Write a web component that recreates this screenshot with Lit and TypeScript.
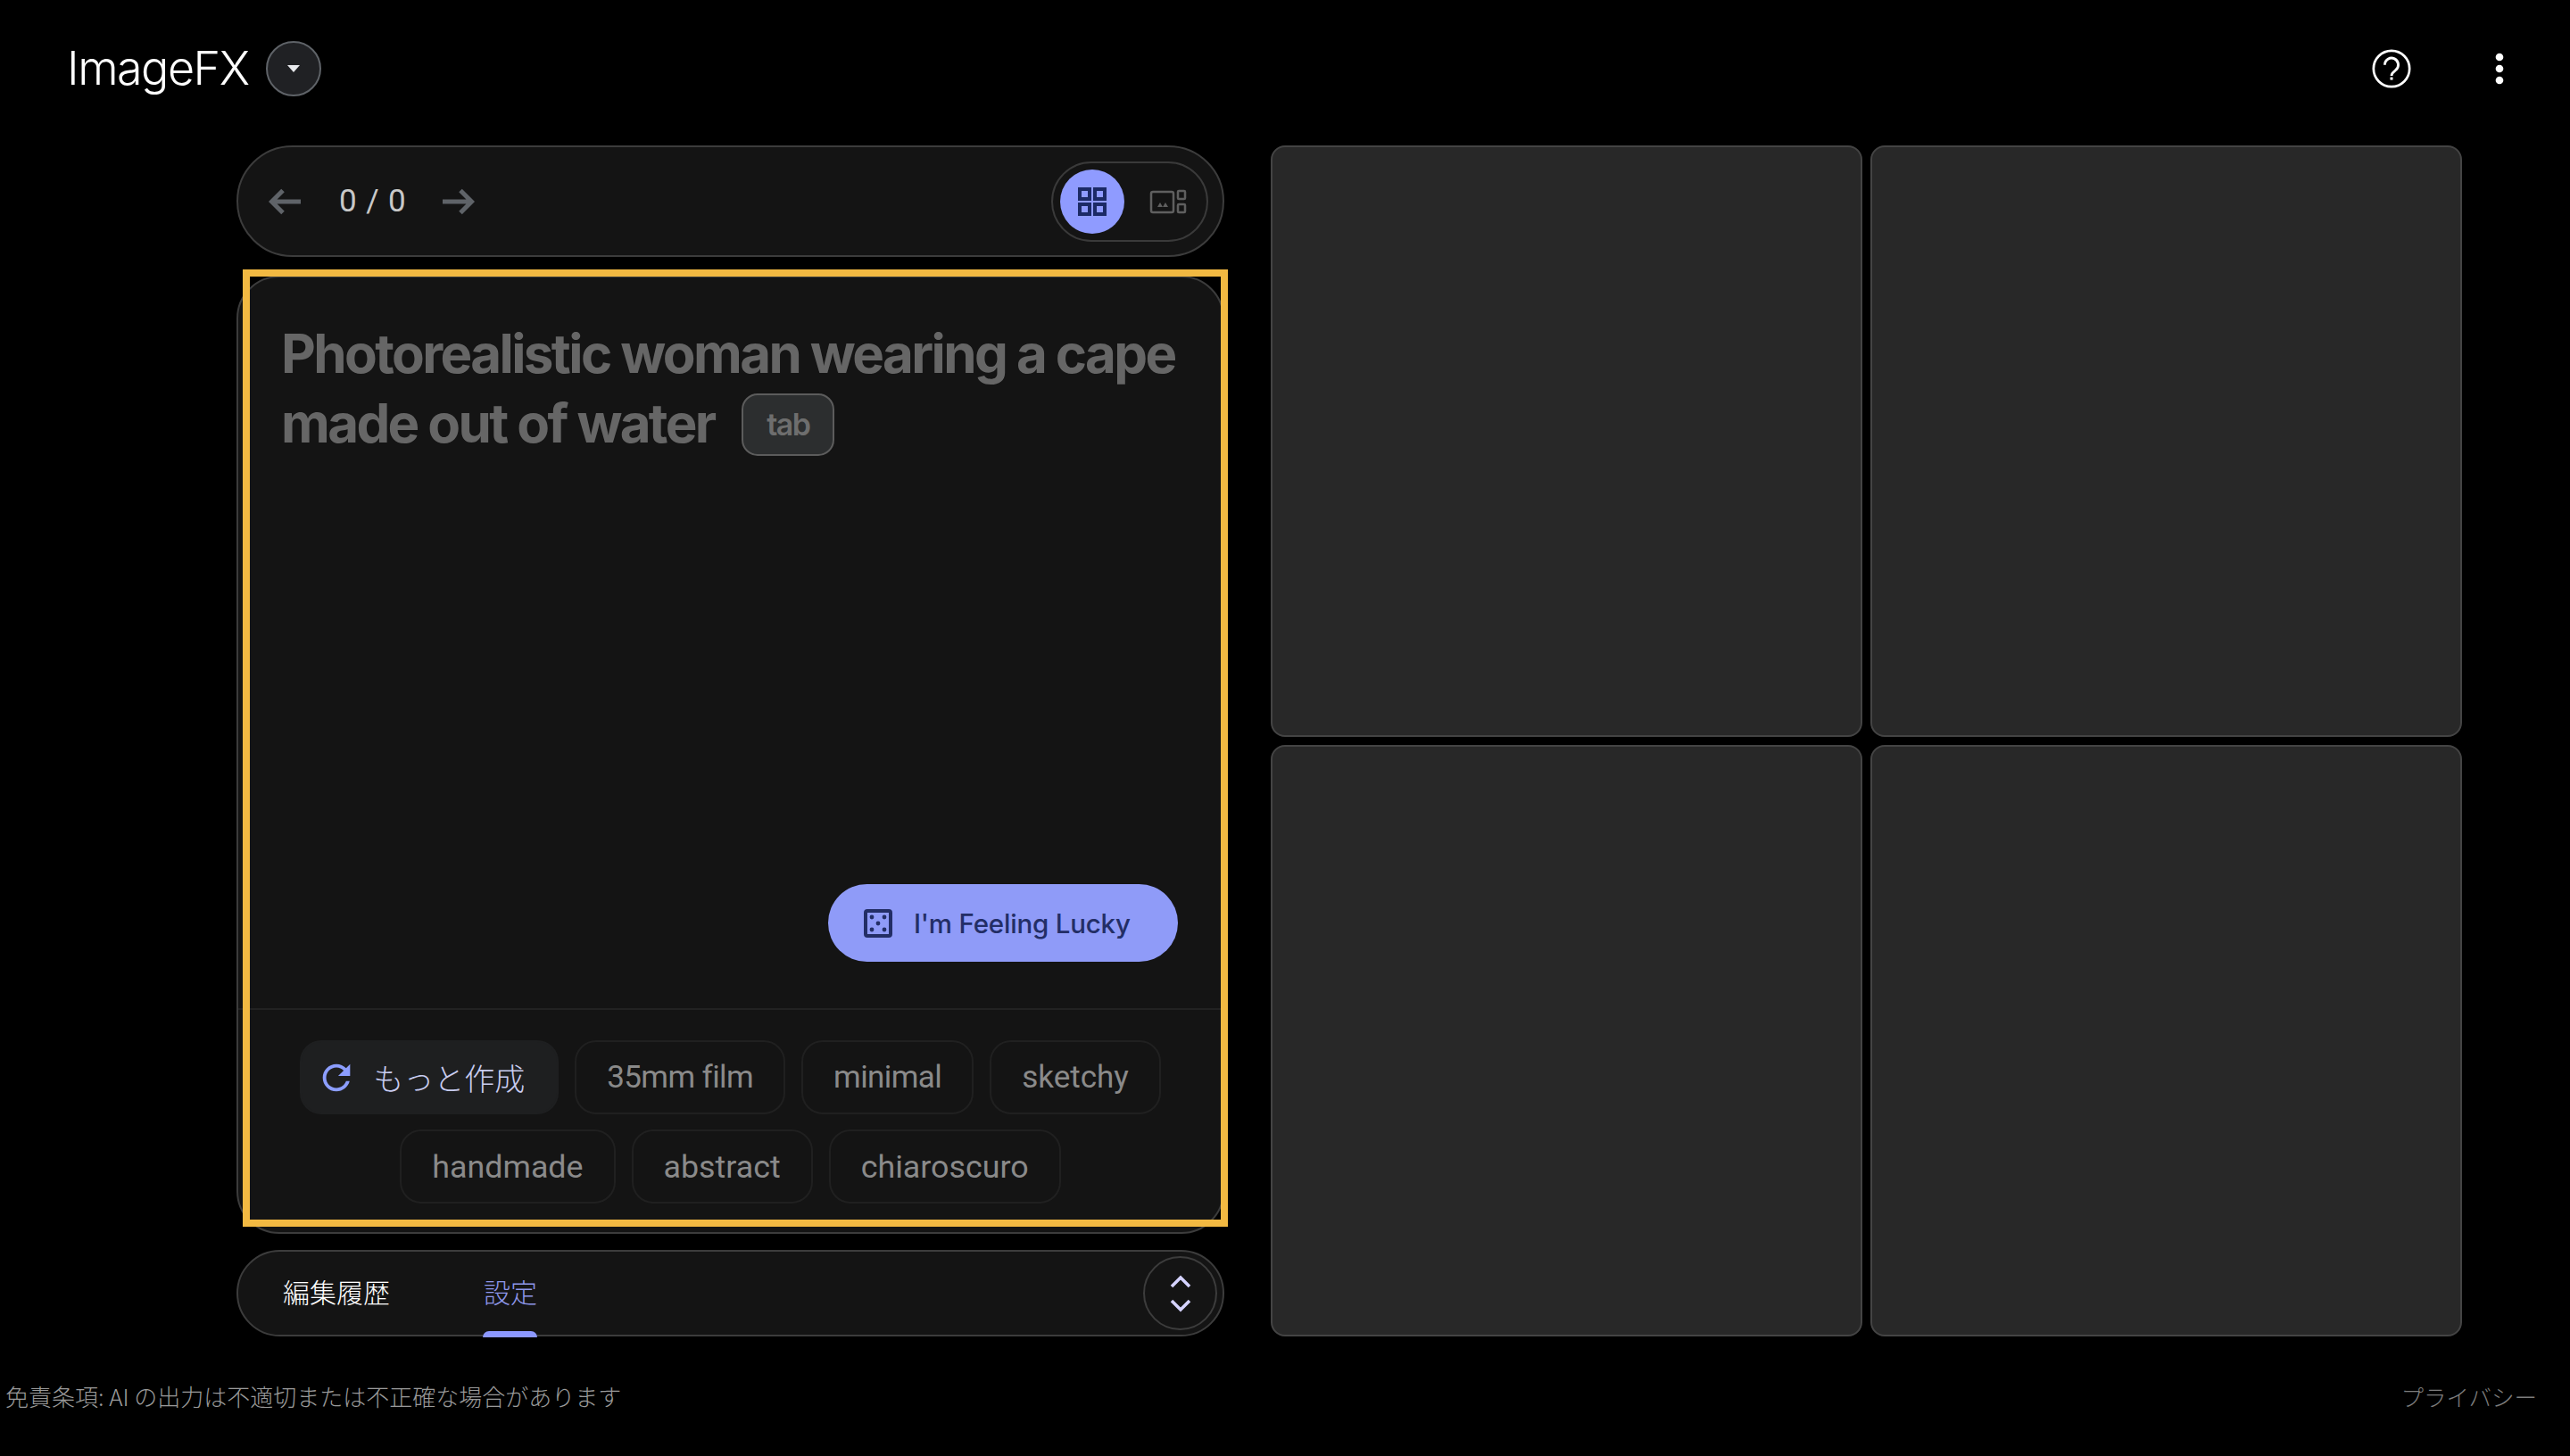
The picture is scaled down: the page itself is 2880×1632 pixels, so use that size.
import { LitElement, html, css } from "lit";
import { customElement } from "lit/decorators.js";

@customElement("app-root")
export class AppRoot extends LitElement {
  static styles = css`
    :host { display: block; width: 2880px; height: 1632px; background: #000; color: #fff; overflow: hidden; font-family: Roboto, "Noto Sans CJK JP", sans-serif; }
    .hdr { height: 154px; display: flex; align-items: center; padding: 0 53px 0 75px; }
    .logo { font-family: Inter, sans-serif; font-size: 52px; font-weight: 300; letter-spacing: -1.5px; color: #fff; line-height: 1; }
    .drop { width: 62px; height: 62px; box-sizing: border-box; border-radius: 50%; background: #202124; border: 2px solid #5f6368; margin-left: 19px; display: flex; align-items: center; justify-content: center; }
    .spacer { flex: 1; }
    .hicons { display: flex; gap: 69px; }
    .hicons svg { width: 52px; height: 52px; display: block; }
    .main { margin-top: 9px; padding-left: 265px; display: flex; gap: 52px; }
    .left { width: 1107px; height: 1335px; display: flex; flex-direction: column; }
    .bar { box-sizing: border-box; background: #141414; border: 2px solid #3c3c3c; display: flex; align-items: center; }
    .nav { height: 125px; border-radius: 63px; padding: 0 16px 0 34px; }
    .arrow { width: 38px; height: 30px; display: block; }
    .count { font-family: Roboto, sans-serif; font-size: 35px; color: #c8c8c8; margin: 0 38px 0 41px; white-space: nowrap; letter-spacing: 0.9px; }
    .toggle { margin-left: auto; width: 176px; height: 90px; box-sizing: border-box; border: 2px solid #3a3a3a; border-radius: 45px; display: flex; align-items: center; padding-left: 8px; }
    .active { width: 72px; height: 72px; border-radius: 50%; background: #8f9bff; display: flex; align-items: center; justify-content: center; }
    .active svg { width: 34px; height: 34px; display: block; }
    .other { width: 42px; height: 28px; display: block; margin-left: 28px; }
    .cardwrap { position: relative; flex: 1; margin: 21px 0 18px; display: flex; }
    .card { flex: 1; box-sizing: border-box; background: #141414; border: 2px solid #3c3c3c; border-radius: 48px; display: flex; flex-direction: column; }
    .mark { position: absolute; left: 7px; right: -4px; top: -7px; bottom: 8px; border: 8px solid #f2b942; pointer-events: none; }
    .prompt { flex: 1; padding: 46px 50px 52px 48px; display: flex; flex-direction: column; }
    .ph { margin: 0; font-family: Inter, sans-serif; font-size: 60px; line-height: 78px; font-weight: 700; letter-spacing: -2.6px; color: #666; flex: 1; }
    .tabk { display: inline-flex; align-items: center; justify-content: center; width: 104px; height: 70px; box-sizing: border-box; margin-left: 19px; vertical-align: middle; background: #2c2e2f; border: 2px solid #5c5c5c; border-radius: 18px; font-size: 34px; font-weight: 600; letter-spacing: -1.6px; color: #6e6e6e; position: relative; top: -4px; }
    .lucky { align-self: flex-end; width: 392px; height: 87px; box-sizing: border-box; border-radius: 44px; background: #8f9bf8; color: #232e66; display: flex; align-items: center; padding-left: 40px; font-family: Inter, sans-serif; font-size: 29.5px; font-weight: 500; letter-spacing: -0.2px; white-space: nowrap; }
    .lucky svg { width: 32px; height: 32px; margin-right: 24px; flex: none; display: block; }
    .chips { border-top: 2px solid #222; padding: 34px 0 32px; display: flex; flex-wrap: wrap; justify-content: center; gap: 17px 18px; }
    .chip { box-sizing: border-box; height: 83px; border: 2px solid #202020; border-radius: 24px; padding: 0 34px; display: flex; align-items: center; font-size: 35px; color: #8a8a8a; white-space: nowrap; }
    .tight { letter-spacing: -0.6px; }
    .wide { font-size: 35.8px; }
    .more { background: #1e1f20; border-color: #1e1f20; padding: 0 36px 0 16px; color: #c9cdf0; font-family: "Noto Sans CJK JP", sans-serif; font-size: 34px; font-weight: 300; }
    .more svg { width: 46px; height: 46px; fill: #8c9eff; margin-right: 18px; display: block; }
    .bottom { height: 97px; border-radius: 49px; position: relative; padding: 0 6px 0 50px; }
    .tab { font-family: "Noto Sans CJK JP", sans-serif; font-size: 30px; font-weight: 300; color: #fff; padding-bottom: 6px; }
    .tab2 { color: #8e97ea; margin-left: 105px; }
    .ind { position: absolute; left: 274px; bottom: -3px; width: 61px; height: 7px; background: #8c98ff; border-radius: 7px 7px 0 0; }
    .expand { margin-left: auto; width: 83px; height: 83px; box-sizing: border-box; border: 2px solid #3c3c3c; border-radius: 50%; display: flex; align-items: center; justify-content: center; }
    .expand svg { width: 30px; height: 44px; display: block; }
    .tiles { display: grid; grid-template-columns: 663px 663px; grid-template-rows: 663px 663px; gap: 9px; }
    .tile { background: #282828; border: 2px solid #444; border-radius: 16px; box-sizing: border-box; }
    .foot { margin-top: 49px; padding: 0 37px 0 6px; display: flex; justify-content: space-between; align-items: center; font-family: "Noto Sans CJK JP", sans-serif; font-weight: 300; font-size: 26px; line-height: 36px; color: #9a9a9a; }
    .priv { font-size: 25.5px; color: #7c7c7c; }
  `;

  render() {
    return html`
      <div class="hdr">
        <div class="logo">ImageFX</div>
        <div class="drop">
          <svg width="14" height="8" viewBox="0 0 14 8"><path d="M0 0h14L7 8z" fill="#e8eaed"/></svg>
        </div>
        <div class="spacer"></div>
        <div class="hicons">
          <svg viewBox="0 0 24 24"><circle cx="12" cy="12" r="9.3" fill="none" stroke="#fff" stroke-width="1.25"/><path d="M8.5 10a3.5 3.5 0 1 1 5.6 2.8c-1.2.9-2.1 1.4-2.1 2.9" fill="none" stroke="#fff" stroke-width="1.3"/><rect x="11.3" y="16.4" width="1.4" height="1.4" fill="#fff"/></svg>
          <svg viewBox="0 0 24 24" fill="#fff"><path d="M12 8c1.1 0 2-.9 2-2s-.9-2-2-2-2 .9-2 2 .9 2 2 2zm0 2c-1.1 0-2 .9-2 2s.9 2 2 2 2-.9 2-2-.9-2-2-2zm0 6c-1.1 0-2 .9-2 2s.9 2 2 2 2-.9 2-2-.9-2-2-2z"/></svg>
        </div>
      </div>
      <div class="main">
        <div class="left">
          <div class="bar nav">
            <svg class="arrow" viewBox="0 0 38 30"><path d="M36 15H5M16 2.5 3.5 15 16 27.5" fill="none" stroke="#5f6368" stroke-width="5"/></svg>
            <span class="count">0 / 0</span>
            <svg class="arrow" viewBox="0 0 38 30"><path d="M2 15h31M22 2.5 34.5 15 22 27.5" fill="none" stroke="#5f6368" stroke-width="5"/></svg>
            <div class="toggle">
              <div class="active">
                <svg viewBox="0 0 34 34"><g fill="none" stroke="#1c2a66" stroke-width="4"><rect x="3" y="3" width="11" height="11"/><rect x="20" y="3" width="11" height="11"/><rect x="3" y="20" width="11" height="11"/><rect x="20" y="20" width="11" height="11"/></g></svg>
              </div>
              <svg class="other" viewBox="0 0 42 28"><g fill="none" stroke="#5f5f5f" stroke-width="2.5"><rect x="2" y="3" width="25" height="23" rx="2"/><rect x="32" y="2" width="8" height="9" rx="1"/><rect x="32" y="17" width="8" height="9" rx="1"/></g><path d="M9 20l3-5 3 5zM15 20l3-5 3 5z" fill="#5f5f5f"/></svg>
            </div>
          </div>
          <div class="cardwrap">
            <div class="card">
              <div class="prompt">
                <p class="ph">Photorealistic woman wearing a cape made out of water <span class="tabk">tab</span></p>
                <div class="lucky">
                  <svg viewBox="0 0 32 32"><rect x="2" y="2" width="28" height="28" rx="2" fill="none" stroke="#232e66" stroke-width="4"/><g fill="#232e66"><circle cx="9" cy="9" r="2.4"/><circle cx="23" cy="9" r="2.4"/><circle cx="16" cy="16" r="2.4"/><circle cx="9" cy="23" r="2.4"/><circle cx="23" cy="23" r="2.4"/></g></svg>
                  I'm Feeling Lucky
                </div>
              </div>
              <div class="chips">
                <div class="chip more"><svg viewBox="0 0 24 24"><path d="M17.65 6.35C16.2 4.9 14.21 4 12 4c-4.42 0-7.99 3.58-7.99 8s3.57 8 7.99 8c3.73 0 6.84-2.55 7.73-6h-2.08c-.82 2.33-3.04 4-5.65 4-3.31 0-6-2.69-6-6s2.69-6 6-6c1.66 0 3.14.69 4.22 1.78L13 11h7V4l-2.35 2.35z"/></svg>もっと作成</div>
                <div class="chip tight">35mm film</div>
                <div class="chip tight">minimal</div>
                <div class="chip">sketchy</div>
                <div class="chip wide">handmade</div>
                <div class="chip wide">abstract</div>
                <div class="chip wide">chiaroscuro</div>
              </div>
            </div>
            <div class="mark"></div>
          </div>
          <div class="bar bottom">
            <span class="tab">編集履歴</span>
            <span class="tab tab2">設定</span>
            <div class="ind"></div>
            <div class="expand">
              <svg viewBox="0 0 30 44"><path d="M5 14 15 4l10 10M5 30l10 10 10-10" fill="none" stroke="#d5d3ff" stroke-width="3.6"/></svg>
            </div>
          </div>
        </div>
        <div class="tiles">
          <div class="tile"></div><div class="tile"></div><div class="tile"></div><div class="tile"></div>
        </div>
      </div>
      <div class="foot">
        <span>免責条項: AI の出力は不適切または不正確な場合があります</span>
        <span class="priv">プライバシー</span>
      </div>
    `;
  }
}
